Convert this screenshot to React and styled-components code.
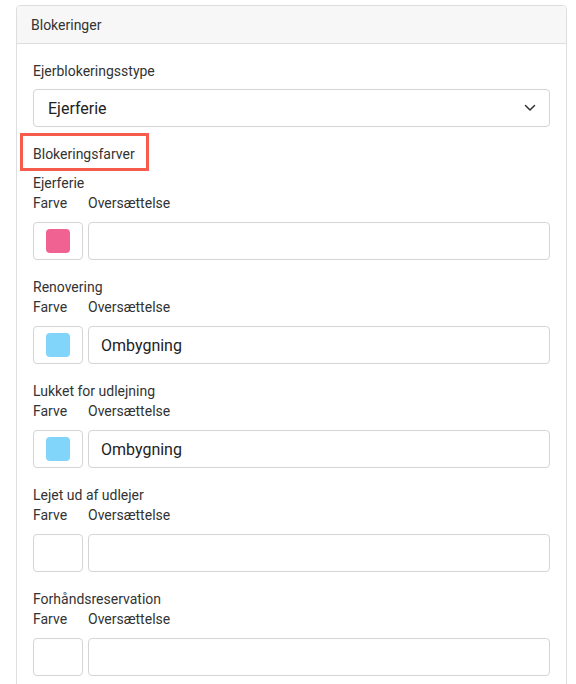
import React from 'react';
import styled, { createGlobalStyle } from 'styled-components';

const GlobalStyle = createGlobalStyle`
  html, body {
    margin: 0;
    padding: 0;
    background: #ffffff;
    font-family: Roboto, "Liberation Sans", Arial, sans-serif;
    color: #333333;
  }
`;

const Page = styled.div`
  padding: 5px 9px 0 16px;
`;

const Card = styled.div`
  border: 1px solid #dedede;
  border-radius: 4px;
  background: #fff;
  overflow: hidden;
`;

const CardHeader = styled.div`
  background: #f7f7f7;
  border-bottom: 1px solid #dedede;
  height: 37px;
  padding: 0 14px;
  display: flex;
  align-items: center;
  font-size: 14px;
  color: #333;
`;

const CardBody = styled.div`
  padding: 17px 16px 40px 16px;
`;

const Label = styled.div`
  font-size: 14px;
  line-height: 20px;
  color: #333;
`;

const SelectBox = styled.div`
  margin-top: 8px;
  height: 38px;
  box-sizing: border-box;
  border: 1px solid #d4d4d4;
  border-radius: 4px;
  display: flex;
  align-items: center;
  justify-content: space-between;
  padding: 0 13px 0 14px;
  font-size: 16px;
  color: #222;
`;

const SectionTitle = styled.div`
  margin-top: 17px;
  font-size: 14px;
  line-height: 20px;
  color: #333;
  position: relative;
  display: inline-block;

  &::after {
    content: '';
    position: absolute;
    left: -13px;
    top: -11px;
    width: 129px;
    height: 38px;
    box-sizing: border-box;
    border: 3px solid #f65c4b;
  }
`;

const Group = styled.div`
  margin-top: ${(p) => (p.$first ? '9px' : '17px')};
`;

const ColumnLabels = styled.div`
  display: grid;
  grid-template-columns: 50px 1fr;
  column-gap: 5px;
  font-size: 14px;
  line-height: 20px;
  color: #333;
`;

const Row = styled.div`
  margin-top: 9px;
  display: grid;
  grid-template-columns: 50px 1fr;
  column-gap: 5px;
`;

const ColorBox = styled.div`
  height: 38px;
  box-sizing: border-box;
  border: 1px solid #d4d4d4;
  border-radius: 4px;
  display: flex;
  align-items: center;
  justify-content: center;
`;

const Swatch = styled.div`
  width: 24px;
  height: 24px;
  border-radius: 4px;
  background: ${(p) => p.$color};
`;

const TextInput = styled.div`
  height: 38px;
  box-sizing: border-box;
  border: 1px solid #d4d4d4;
  border-radius: 4px;
  display: flex;
  align-items: center;
  padding: 0 12px;
  font-size: 16px;
  color: #222;
`;

const groups = [
  { name: 'Ejerferie', color: '#f06292', text: '' },
  { name: 'Renovering', color: '#81d4fa', text: 'Ombygning' },
  { name: 'Lukket for udlejning', color: '#81d4fa', text: 'Ombygning' },
  { name: 'Lejet ud af udlejer', color: null, text: '' },
  { name: 'Forhåndsreservation', color: null, text: '' },
];

const Chevron = () => (
  <svg width="12" height="8" viewBox="0 0 12 8" fill="none">
    <path d="M1.5 1.5L6 6l4.5-4.5" stroke="#333" strokeWidth="1.5" strokeLinecap="round" strokeLinejoin="round" />
  </svg>
);

const App = () => {
  return (
    <Page>
      <GlobalStyle />
      <Card>
        <CardHeader>Blokeringer</CardHeader>
        <CardBody>
          <Label>Ejerblokeringsstype</Label>
          <SelectBox>
            <span>Ejerferie</span>
            <Chevron />
          </SelectBox>
          <SectionTitle>Blokeringsfarver</SectionTitle>
          {groups.map((g, i) => (
            <Group key={g.name} $first={i === 0}>
              <Label>{g.name}</Label>
              <ColumnLabels>
                <span>Farve</span>
                <span>Oversættelse</span>
              </ColumnLabels>
              <Row>
                <ColorBox>{g.color && <Swatch $color={g.color} />}</ColorBox>
                <TextInput>{g.text}</TextInput>
              </Row>
            </Group>
          ))}
        </CardBody>
      </Card>
    </Page>
  );
};

export default App;
